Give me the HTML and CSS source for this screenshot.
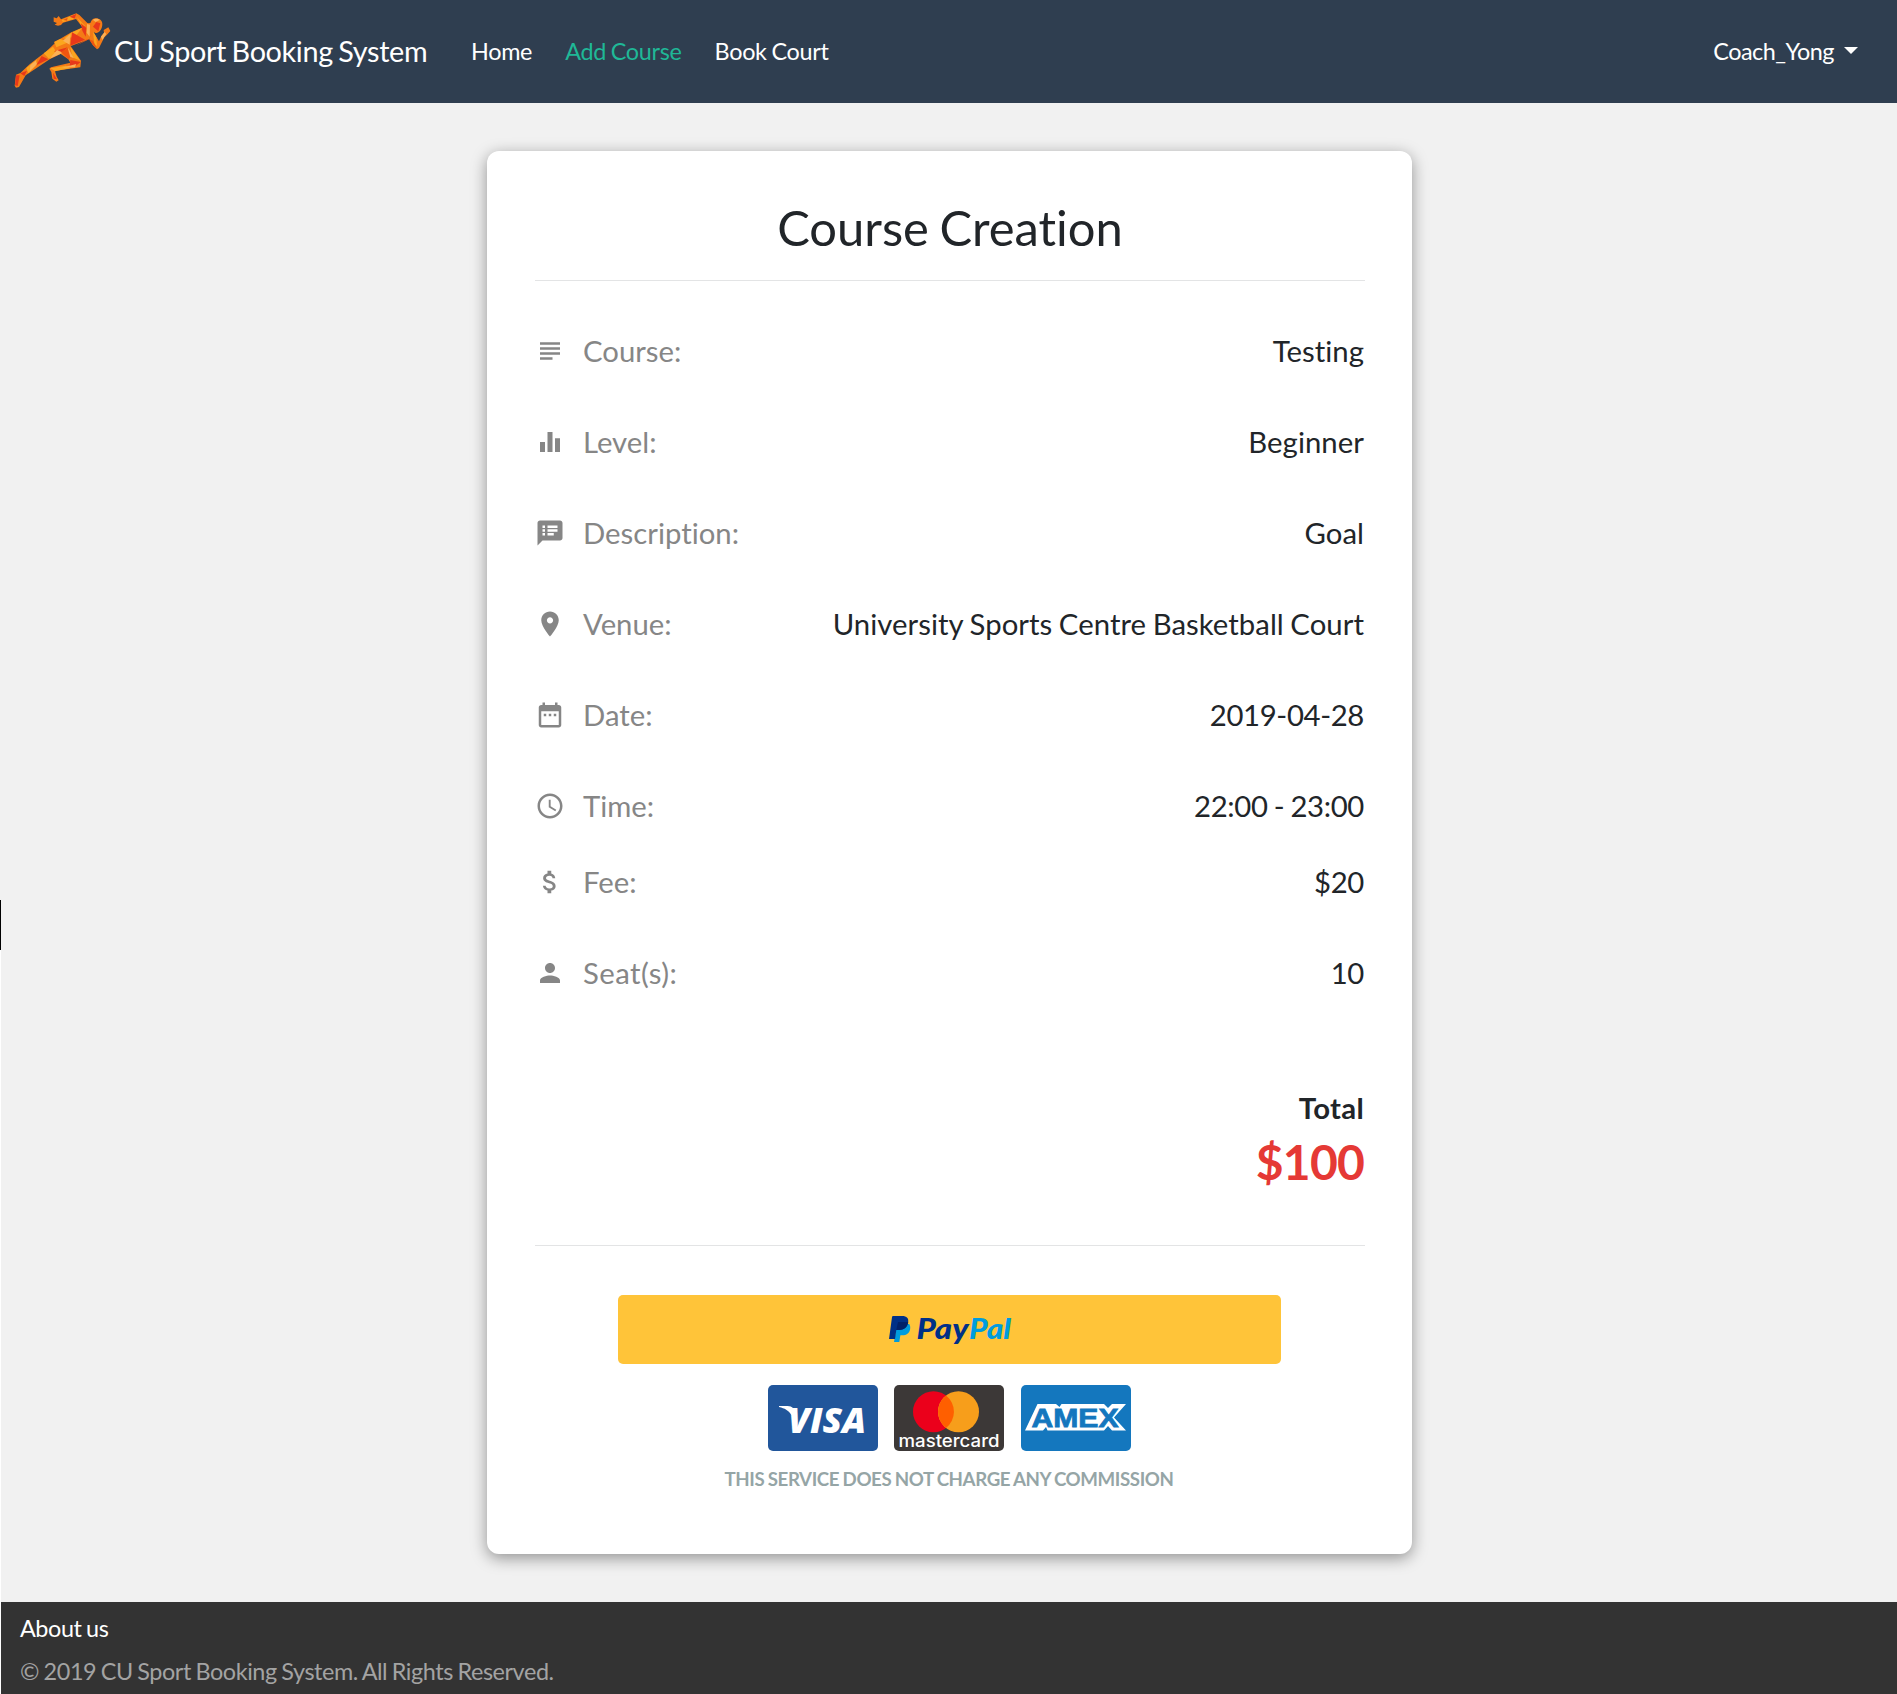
FILE: index.html
```html
<!DOCTYPE html>
<html lang="en">
<head>
<meta charset="utf-8">
<title>CU Sport Booking System</title>
<link rel="stylesheet" href="styles.css">
</head>
<body>
<header class="navbar">
  <svg class="logo" viewBox="40 30 300 240" aria-hidden="true">
    <g fill="#f47a16">
      <path d="M162 52L171 55L177 48L184 58L230 40L239 45L266 72L250 84L229 57L190 68L184 75L175 77L165 74L172 69L162 65Z"/>
      <path d="M242 66L266 70L278 68L281 94L268 118L212 139L165 152L164 125L182 116L215 97L250 82Z"/>
      <path d="M272 70C276 54 288 53 296 56C309 60 310 72 306 84C302 95 294 101 286 98L276 94Z"/>
      <path d="M268 116L279 92L298 124L305 108L313 98L312 90L326 82L332 93L322 104L314 112L298 144L292 148L280 136Z"/>
      <path d="M160 138L210 134L244 182L242 202L184 210L166 214L171 230L177 241L170 245L158 236L155 216L149 206L154 202L212 188L206 178L178 158Z"/>
      <path d="M163 132L206 142L182 162L150 178L112 203L78 226L70 240L58 261L49 263L45 257L49 224L62 219L90 193L114 174L138 156Z"/>
    </g>
    <g fill="#fba61f">
      <path d="M186 60L228 42L225 56L190 66ZM232 52L256 78L248 82ZM190 116L215 98L248 83L226 110ZM164 126L182 117L208 126L170 142ZM132 160L160 140L172 158L148 176ZM212 140L242 182L218 172ZM152 205L198 197L212 205L166 213ZM80 204L112 178L108 198L86 220ZM280 94L290 112L292 138L284 132Z"/>
    </g>
    <g fill="#e8381a">
      <path d="M210 50L230 41L225 56ZM244 70L260 84L258 110L248 92ZM217 97L256 119L212 137ZM162 154L204 142L186 158ZM110 196L126 168L146 178ZM212 180L243 186L228 198L210 198ZM290 66L302 70L296 94L280 80ZM160 218L172 238L162 236ZM49 226L60 226L54 258L46 256ZM62 220L82 212L74 228Z"/>
    </g>
    <g fill="#fbb056">
      <path d="M190 122L212 102L210 134ZM262 72L271 74L270 110L261 98ZM172 150L190 158L150 176ZM206 144L222 174L204 168ZM92 196L108 182L112 192L90 214ZM280 60C286 55 296 56 300 60L288 66ZM304 110L315 96L320 102L308 120ZM186 203L230 192L226 202Z"/>
    </g>
    <path fill="#ee5511" d="M184 156L204 144L212 172L206 178ZM268 118L280 122L292 146L280 136ZM190 60L204 53L202 62ZM228 137L262 118L268 118Z"/>
  </svg>
  <a class="brand">CU Sport Booking System</a>
  <nav class="links">
    <a>Home</a>
    <a class="active">Add Course</a>
    <a>Book Court</a>
  </nav>
  <a class="user">Coach_Yong<span class="caret"></span></a>
</header>

<main class="page">
  <section class="card">
    <h1>Course Creation</h1>
    <dl class="details">
      <div class="row"><dt><svg viewBox="0 0 24 24"><path d="M14 17H4v2h10v-2zm6-8H4v2h16V9zM4 15h16v-2H4v2zM4 5v2h16V5H4z"/></svg>Course:</dt><dd>Testing</dd></div>
      <div class="row"><dt><svg viewBox="0 0 24 24"><path d="M10 20h4V4h-4v16zm-6 0h4v-8H4v8zM16 9v11h4V9h-4z"/></svg>Level:</dt><dd>Beginner</dd></div>
      <div class="row"><dt><svg viewBox="0 0 24 24"><path d="M20 2H4c-1.1 0-1.99.9-1.99 2L2 22l4-4h14c1.1 0 2-.9 2-2V4c0-1.1-.9-2-2-2zM8 14H6v-2h2v2zm0-3H6V9h2v2zm0-3H6V6h2v2zm7 6h-5v-2h5v2zm3-3h-8V9h8v2zm0-3h-8V6h8v2z"/></svg>Description:</dt><dd>Goal</dd></div>
      <div class="row"><dt><svg viewBox="0 0 24 24"><path d="M12 2C8.13 2 5 5.13 5 9c0 5.25 7 13 7 13s7-7.75 7-13c0-3.87-3.13-7-7-7zm0 9.5c-1.38 0-2.5-1.12-2.5-2.5s1.12-2.5 2.5-2.5 2.5 1.12 2.5 2.5-1.12 2.5-2.5 2.5z"/></svg>Venue:</dt><dd>University Sports Centre Basketball Court</dd></div>
      <div class="row"><dt><svg viewBox="0 0 24 24"><path d="M9 11H7v2h2v-2zm4 0h-2v2h2v-2zm4 0h-2v2h2v-2zm2-7h-1V2h-2v2H8V2H6v2H5c-1.11 0-1.99.9-1.99 2L3 20c0 1.1.89 2 2 2h14c1.1 0 2-.9 2-2V6c0-1.1-.9-2-2-2zm0 16H5V9h14v11z"/></svg>Date:</dt><dd class="num">2019-04-28</dd></div>
      <div class="row tight"><dt><svg viewBox="0 0 24 24"><path d="M11.99 2C6.47 2 2 6.48 2 12s4.47 10 9.99 10C17.52 22 22 17.52 22 12S17.52 2 11.99 2zM12 20c-4.42 0-8-3.58-8-8s3.58-8 8-8 8 3.58 8 8-3.58 8-8 8zm.5-13H11v6l5.25 3.15.75-1.23-4.5-2.67z"/></svg>Time:</dt><dd class="num">22:00 - 23:00</dd></div>
      <div class="row"><dt><svg viewBox="0 0 24 24"><path d="M11.8 10.9c-2.27-.59-3-1.2-3-2.15 0-1.09 1.01-1.85 2.7-1.85 1.78 0 2.44.85 2.5 2.1h2.21c-.07-1.72-1.12-3.3-3.21-3.81V3h-3v2.16c-1.94.42-3.5 1.68-3.5 3.61 0 2.31 1.91 3.46 4.7 4.13 2.5.6 3 1.48 3 2.41 0 .69-.49 1.79-2.7 1.79-2.06 0-2.87-.92-2.98-2.1h-2.2c.12 2.19 1.76 3.42 3.68 3.83V21h3v-2.15c1.95-.37 3.5-1.5 3.5-3.55 0-2.84-2.43-3.81-4.7-4.4z"/></svg>Fee:</dt><dd class="num">$20</dd></div>
      <div class="row"><dt class="seats"><svg viewBox="0 0 24 24"><path d="M12 12c2.21 0 4-1.79 4-4s-1.79-4-4-4-4 1.79-4 4 1.79 4 4 4zm0 2c-2.67 0-8 1.34-8 4v2h16v-2c0-2.66-5.33-4-8-4z"/></svg>Seat(s):</dt><dd class="num">10</dd></div>
    </dl>
    <div class="total">
      <div class="total-label">Total</div>
      <div class="total-amount">$100</div>
    </div>
    <div class="payment">
      <button class="paypal" aria-label="PayPal">
        <svg width="124" height="36" viewBox="0 -3 124 36">
          <path fill="#009cde" d="M8 9h12.200c1 1.500 1.300 3.200.9 5.300-.8 4-3.700 6-7.700 6h-2l-1.100 6.700H5z"/>
          <path fill="#003087" d="M4.200 1H13c5 0 6.800 2.300 6.200 6.200-.8 5-4 7.700-9 7.700H7.300L6 24H0L3 2.200C3.200 1.400 3.500 1 4.200 1z"/>
          <path fill="#012169" d="M9 7h10.200c-.6 4.800-4 7.900-9 7.900H7.300z"/>
          <text class="pp-text pp-dark" x="27.500" y="24" textLength="52" lengthAdjust="spacingAndGlyphs">Pay</text>
          <text class="pp-text pp-light" x="80" y="24" textLength="42" lengthAdjust="spacingAndGlyphs">Pal</text>
        </svg>
      </button>
      <div class="brands">
        <svg width="110" height="66" viewBox="0 0 110 66">
          <rect width="110" height="66" rx="5" fill="#21569b"/>
          <path fill="#fff" d="M11 21h8.500c5 0 7 3 8 7l-4 2C20 25 17 23.500 11 22z"/>
          <text class="visa-text" x="20" y="47.500" textLength="78" lengthAdjust="spacingAndGlyphs">VISA</text>
        </svg>
        <svg width="110" height="66" viewBox="0 0 110 66">
          <rect width="110" height="66" rx="5" fill="#3c3837"/>
          <circle cx="39.500" cy="26.700" r="20.500" fill="#eb001b"/>
          <circle cx="64.500" cy="26.700" r="20.500" fill="#f79e1b"/>
          <path fill="#ff5f00" d="M52 10.500a20.500 20.500 0 0 1 0 32.400a20.500 20.500 0 0 1 0-32.400z"/>
          <text class="mc-text" x="4.500" y="61.500" textLength="101" lengthAdjust="spacingAndGlyphs">mastercard</text>
        </svg>
        <svg width="110" height="66" viewBox="0 0 110 66">
          <rect width="110" height="66" rx="5" fill="#1477be"/>
          <path fill="#fff" d="M4 45.500L16.500 19H35l3.500 3 2-3H83l4 4 4-4h14L93 32.500l12 13H91l-4-4.500-4 4.500H26.500L25 42l-3 3.500z"/>
          <text class="amex-text" x="10.500" y="41.500" textLength="87" lengthAdjust="spacingAndGlyphs">AMEX</text>
        </svg>
      </div>
      <p class="note">THIS SERVICE DOES NOT CHARGE ANY COMMISSION</p>
    </div>
  </section>
</main>

<footer class="footer">
  <a class="about">About us</a>
  <p class="copyright">© 2019 CU Sport Booking System. All Rights Reserved.</p>
</footer>
<div class="edge"></div>
</body>
</html>
```
FILE: styles.css
```css
* {
  box-sizing: border-box;
}

body {
  position: relative;
  margin: 0;
  background: #f1f1f1;
  color: #212529;
  font-family: Lato, "Liberation Sans", sans-serif;
  font-variant-ligatures: none;
}

/* Top bar */
.navbar {
  display: flex;
  align-items: center;
  height: 103px;
  padding: 0 39px 2px 13px;
  background: #2f3e50;
  color: #fff;
  font-size: 23.4px;
  letter-spacing: -0.3px;
  word-spacing: -1px;
}

.logo {
  width: 100px;
  height: 80px;
  margin-top: -1px;
  flex: none;
}

.brand {
  width: 357px;
  padding-left: 1px;
  font-size: 28.8px;
  letter-spacing: -0.35px;
  word-spacing: -1.5px;
  white-space: nowrap;
}

.links {
  display: flex;
  gap: 33px;
  padding-left: 1px;
}

.active {
  color: #1fb897;
}

.user {
  display: flex;
  align-items: center;
  margin-left: auto;
  letter-spacing: -0.5px;
}

.caret {
  margin-left: 10px;
  margin-top: -1px;
  border: 7px solid transparent;
  border-top-color: #fff;
  border-bottom: 0;
}

/* Card */
.page {
  padding: 48px 0;
  display: flex;
  justify-content: center;
}

.card {
  width: 925px;
  height: 1403px;
  margin-left: 2px;
  padding: 46px 47px 0 48px;
  border-radius: 12px;
  background: #fff;
  box-shadow: 0 4px 16px rgba(0, 0, 0, 0.4);
}

h1 {
  height: 84px;
  margin: 0;
  border-bottom: 1px solid #e3e4e5;
  font-size: 48.9px;
  font-weight: 400;
  line-height: 60px;
  text-align: center;
  word-spacing: -2px;
}

.details {
  margin: 47px 0 0;
  font-size: 29.3px;
}

.row {
  display: flex;
  justify-content: space-between;
  align-items: center;
  height: 46px;
  margin-bottom: 45px;
  line-height: 46px;
}

.row.tight {
  margin-bottom: 30px;
}

.row dt {
  display: flex;
  align-items: center;
  gap: 18px;
  color: #868686;
}

.row dt.seats {
  letter-spacing: 0.45px;
}

.row dt svg {
  width: 30px;
  height: 30px;
  fill: currentColor;
}

.row dd {
  margin: 0 1px 0 0;
  word-spacing: -1px;
  letter-spacing: 0.05px;
}

.row .num {
  letter-spacing: -0.35px;
}

.total {
  height: 158px;
  margin-top: 92px;
  border-bottom: 1px solid #e3e4e5;
  padding-right: 1px;
  font-weight: 700;
  text-align: right;
}

.total-label {
  font-size: 29.3px;
  letter-spacing: 0.3px;
  line-height: 40px;
}

.total-amount {
  color: #e53935;
  font-size: 48px;
  letter-spacing: -0.8px;
  line-height: 68px;
}

.payment {
  display: flex;
  flex-direction: column;
  align-items: center;
  padding: 49px 2px 0 0;
}

.paypal {
  display: flex;
  align-items: center;
  justify-content: center;
  width: 663px;
  height: 69px;
  padding: 0 0 0 3px;
  border: 0;
  border-radius: 5px;
  background: #ffc439;
}

.paypal svg {
  overflow: visible;
}

.pp-text {
  font: italic 900 28.5px Lato, sans-serif;
}

.pp-dark {
  fill: #003087;
}

.pp-light {
  fill: #009cde;
}

.brands {
  display: flex;
  gap: 16.5px;
  margin-top: 21px;
}

.visa-text {
  fill: #fff;
  font: italic 800 36px "Open Sans", sans-serif;
}

.mc-text {
  fill: #fff;
  font: 500 17px Inter, sans-serif;
}

.amex-text {
  fill: #1477be;
  stroke: #1477be;
  stroke-width: 0.8px;
  font: 700 26px "Liberation Sans", sans-serif;
}

.note {
  margin: 17px 0 0;
  color: #95a5a6;
  font-size: 18.7px;
  font-weight: 700;
  letter-spacing: -0.4px;
  line-height: 22px;
  word-spacing: -0.7px;
}

/* Footer */
.footer {
  height: 92px;
  padding: 5px 20px;
  background: #333;
  font-size: 23.4px;
  letter-spacing: -0.42px;
  word-spacing: -1px;
}

.about {
  display: block;
  color: #fff;
  line-height: 43px;
}

.copyright {
  margin: 0;
  color: #a3a3a3;
  line-height: 43px;
}

/* Thin strip along the left window edge */
.edge {
  position: absolute;
  left: 0;
  top: 900px;
  bottom: 0;
  width: 1px;
  border-top: 50px solid #000;
  background: #fff;
}
```
